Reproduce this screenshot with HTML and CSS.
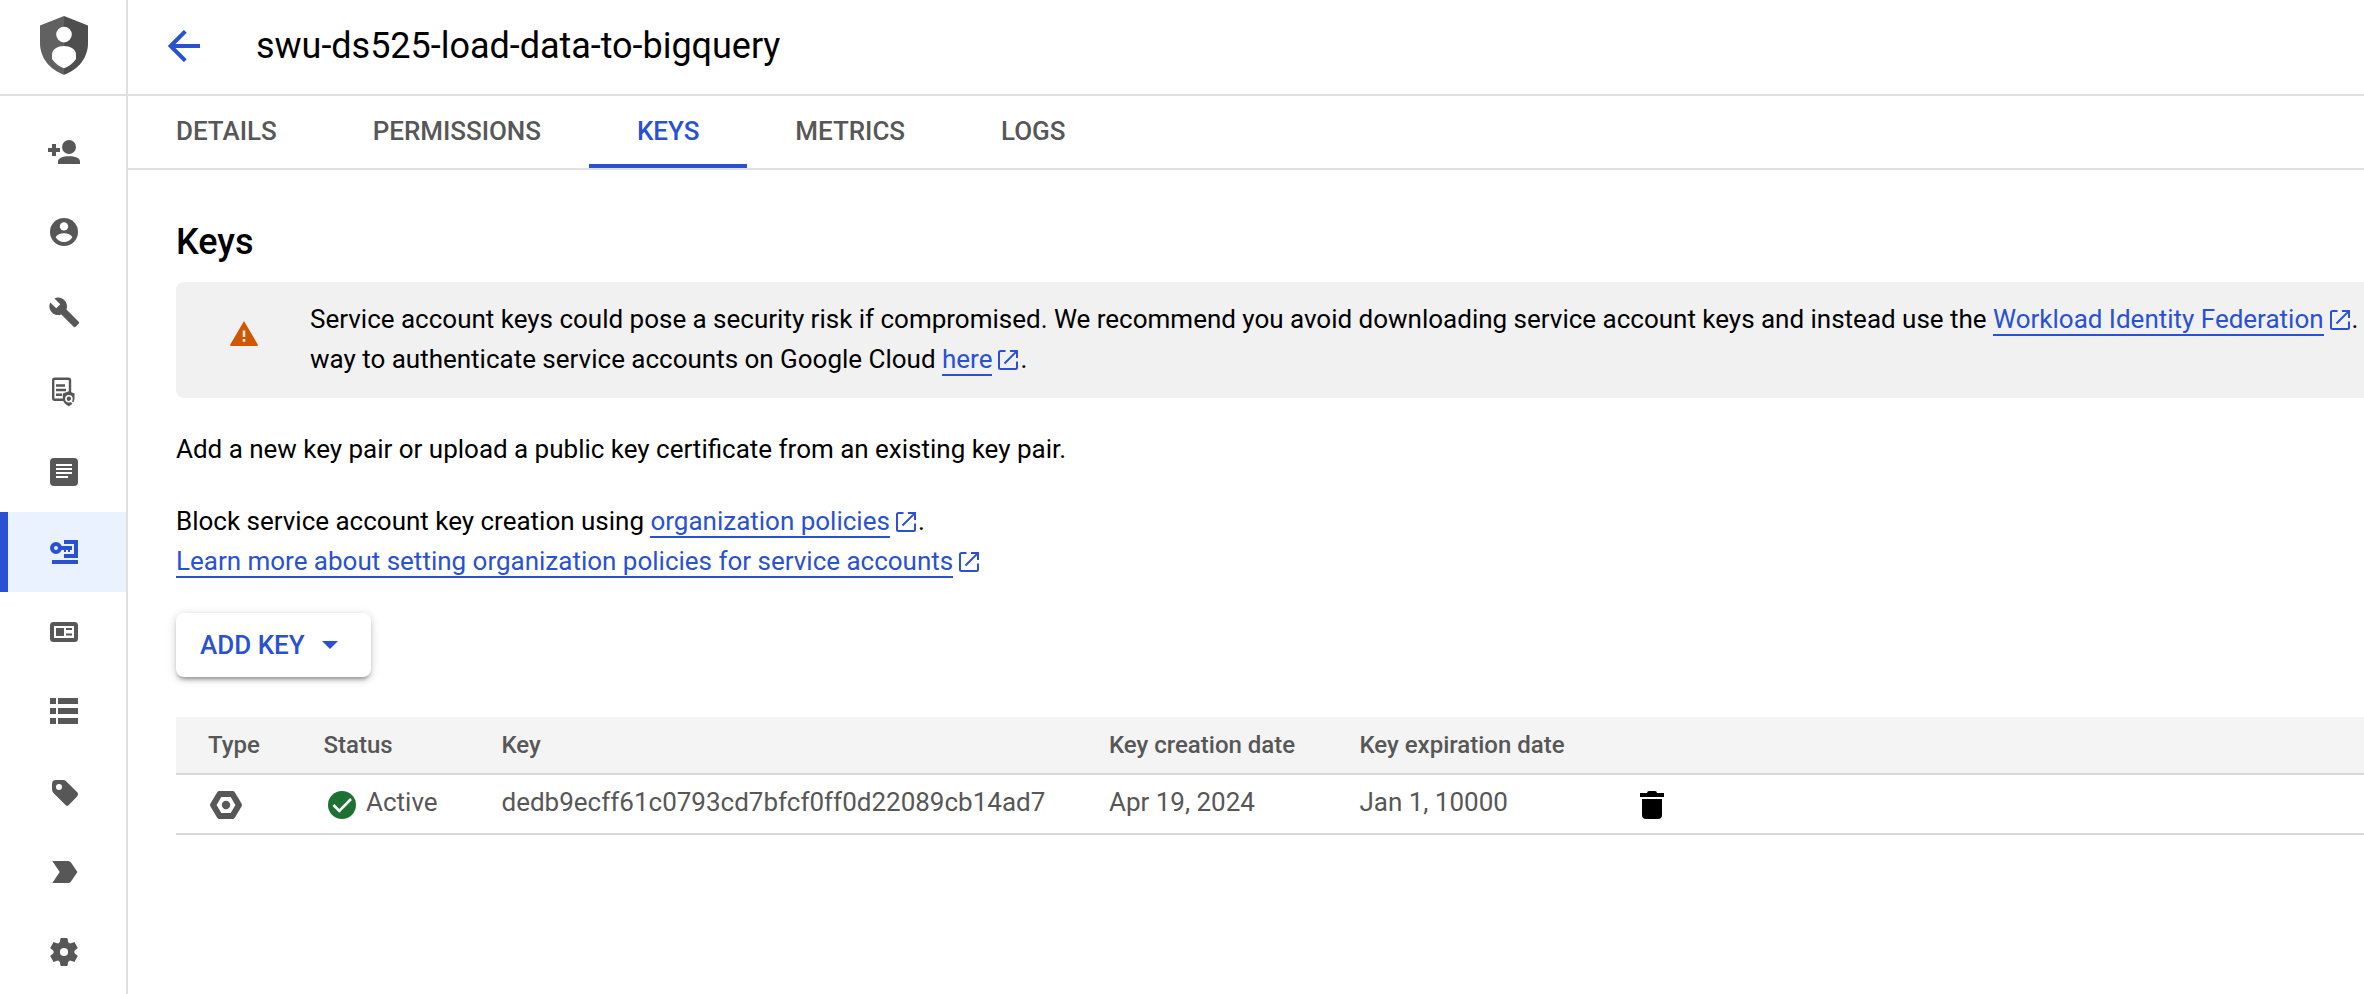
FILE: index.html
```html
<!DOCTYPE html>
<html lang="en">
<head>
<meta charset="utf-8">
<title>swu-ds525-load-data-to-bigquery</title>
<link rel="stylesheet" href="styles.css">
</head>
<body>
<svg class="defs" aria-hidden="true">
  <symbol id="external" viewBox="0 0 20 20">
    <path d="M7.500 1H2.500Q1 1 1 2.500V17.500Q1 19 2.500 19H17.500Q19 19 19 17.500V11.500M12 1H19V8M18.600 1.400L6.500 13.500" fill="none" stroke="currentColor" stroke-width="2"/>
  </symbol>
</svg>
<div class="app">
  <aside class="sidebar">
    <div class="product">
      <svg class="shield" viewBox="0 0 48 59">
        <path fill="#616161" d="M24 0L0 9.500V27C0 42 10 54 24 58.700z"/>
        <path fill="#4e4e4e" d="M24 0L48 9.500V27C48 42 38 54 24 58.700z"/>
        <circle cx="24" cy="18.600" r="7.800" fill="#fff"/>
        <path fill="#fff" d="M12 38.500C12 33 18 30 24 30S36 33 36 38.500V43Q31.500 49.500 24 52.300Q16.500 49.500 12 43z"/>
      </svg>
    </div>
    <nav class="nav">
      <a class="nav-item"><svg viewBox="0 0 36 36"><path d="M6 10h4v4h4v4h-4v4H6v-4H2v-4h4z"/><circle cx="23" cy="13" r="7"/><path d="M12 30V27.500C12 24 17 22.300 23 22.300S34 24 34 27.500V30z"/></svg></a>
      <a class="nav-item"><svg viewBox="0 0 36 36"><circle cx="18" cy="18" r="14"/><circle class="cut" cx="18" cy="12.400" r="4.200"/><path class="cut" d="M9.600 23.300C11 20.600 14.500 19.300 18 19.300S25 20.600 26.400 23.300C24.500 26.300 21.500 28 18 28S11.500 26.300 9.600 23.300z"/></svg></a>
      <a class="nav-item"><svg viewBox="0 0 36 36"><path transform="translate(2.100 2.100) scale(1.350)" d="M22.700 19l-9.100-9.100c.9-2.300.4-5-1.500-6.900-2-2-5-2.400-7.400-1.300L9 6 6 9 1.600 4.700C.4 7.100.9 10.100 2.900 12.100c1.900 1.900 4.600 2.400 6.900 1.500l9.100 9.100c.4.4 1 .4 1.400 0l2.300-2.300c.5-.4.5-1.100.1-1.400z"/></svg></a>
      <a class="nav-item"><svg viewBox="0 0 36 36"><rect x="7.200" y="4.700" width="16.800" height="21" rx="1.500" class="line"/><path class="line" d="M10 11.500h9M10 16h10M10 20.800h6"/><path d="M22.800 17.300l5.700 2.200v4.500c0 4-2.300 6.700-5.700 8.200-3.500-1.500-6-4.200-6-8.200v-4.500z"/><circle cx="22.900" cy="24.800" r="3" fill="none" stroke="#fff" stroke-width="1.600"/><path d="M24 26.300l3.400 3.400" stroke="#fff" stroke-width="1.400"/></svg></a>
      <a class="nav-item"><svg viewBox="0 0 36 36"><rect x="4" y="4" width="28" height="28" rx="4"/><path d="M10 11h16M10 15h16M10 19h16M10 23h12" stroke="#fff" stroke-width="2"/></svg></a>
      <a class="nav-item active"><svg viewBox="0 0 36 36"><path fill-rule="evenodd" d="M10 8a6 6 0 1 0 0 12a6 6 0 1 0 0-12zM10 12a2 2 0 1 1 0 4a2 2 0 1 1 0-4z"/><path d="M15 12h11v4h-2v2h-2v-2h-2v2h-2v-2h-3z"/><path d="M18 6h14v18H18v-4h10V10H18zM6 26h26v4H6z"/></svg></a>
      <a class="nav-item"><svg viewBox="0 0 36 36"><rect x="4" y="8" width="28" height="20" rx="3.500"/><path class="cut" d="M8 12h20v12H8z"/><path d="M10 14h8v8h-8zM20 14h6v2h-6zM20 19.500h6v2h-6z"/></svg></a>
      <a class="nav-item"><svg viewBox="0 0 36 36"><path d="M4 4h6v6H4zM12 4h20v6H12zM4 14h6v6H4zM12 14h20v6H12zM4 24h6v6H4zM12 24h20v6H12z"/></svg></a>
      <a class="nav-item"><svg viewBox="0 0 36 36"><path d="M10 6h7q2 0 3.400 1.400L31 18q2 2.200 0 4.400L22.800 31q-1.600 1.700-3.200 0L7.400 19Q6 17.600 6 15.600V10q0-4 4-4z"/><circle class="cut" cx="13" cy="13" r="3"/></svg></a>
      <a class="nav-item"><svg viewBox="0 0 36 36"><path d="M6.300 7H22q2 0 3 1.500L31.400 18 25 27.500q-1 1.500-3 1.500H6.300L13.700 18z"/></svg></a>
      <a class="nav-item"><svg viewBox="0 0 36 36"><g transform="translate(18 18)"><circle r="10.500"/><path id="cog" d="M-3.400-14h6.800l1 5h-8.800zM-3.400 14h6.800l1-5h-8.800z"/><use href="#cog" transform="rotate(60)"/><use href="#cog" transform="rotate(120)"/><circle r="4.100" class="cut"/></g></svg></a>
    </nav>
  </aside>
  <main class="main">
    <header class="header">
      <svg class="back" viewBox="0 0 32 32"><path d="M32 16H3M17.300 1.300L2.600 16L17.300 30.700" fill="none" stroke="#2951d1" stroke-width="4"/></svg>
      <h1 class="title">swu-ds525-load-data-to-bigquery</h1>
    </header>
    <nav class="tabs">
      <a class="tab">DETAILS</a><a class="tab">PERMISSIONS</a><a class="tab selected">KEYS</a><a class="tab">METRICS</a><a class="tab">LOGS</a>
    </nav>
    <section class="content">
      <h2 class="heading">Keys</h2>
      <div class="banner">
        <svg class="warning" viewBox="0 0 28 25"><path fill="#d05700" d="M14 0L27.700 23.500Q28.300 25 27 25H1Q-.3 25 .3 23.500z"/><path fill="#f1f1f1" d="M12.700 9.500h2.600v6.500h-2.600zM12.700 18h2.600v2.700h-2.600z"/></svg>
        <p class="banner-text">Service account keys could pose a security risk if compromised. We recommend you avoid downloading service account keys and instead use the <a class="link">Workload Identity Federation</a><svg class="ext"><use href="#external"/></svg>.<br>way to authenticate service accounts on Google Cloud <a class="link">here</a><svg class="ext"><use href="#external"/></svg>.</p>
      </div>
      <p class="para">Add a new key pair or upload a public key certificate from an existing key pair.</p>
      <p class="para">Block service account key creation using <a class="link">organization policies</a><svg class="ext"><use href="#external"/></svg>.<br><a class="link">Learn more about setting organization policies for service accounts</a><svg class="ext"><use href="#external"/></svg></p>
      <button class="add-key">ADD KEY<svg class="caret" viewBox="0 0 16 8"><path fill="#2951d1" d="M0 0h16L8 8z"/></svg></button>
      <div class="table">
        <div class="row head"><span>Type</span><span>Status</span><span>Key</span><span>Key creation date</span><span>Key expiration date</span><span></span></div>
        <div class="row body">
          <span class="type"><svg class="hex" viewBox="0 0 32 28"><path fill="#575757" fill-rule="evenodd" d="M9.500 0h13q1.500 0 2.300 1.300L31.500 12.500q.9 1.500 0 3L24.800 26.700Q24 28 22.500 28h-13Q8 28 7.200 26.700L.5 15.500q-.9-1.500 0-3L7.200 1.300Q8 0 9.500 0zM11.300 6L6.600 14l4.700 8h9.400l4.700-8-4.700-8z"/><circle cx="16" cy="14" r="4.200" fill="#575757"/></svg></span>
          <span class="status"><svg class="check" viewBox="0 0 28 28"><circle cx="14" cy="14" r="14" fill="#1e7133"/><path d="M5.500 14L11.300 19.800L23 8" fill="none" stroke="#fff" stroke-width="2.600"/></svg>Active</span>
          <span>dedb9ecff61c0793cd7bfcf0ff0d22089cb14ad7</span>
          <span>Apr 19, 2024</span>
          <span>Jan 1, 10000</span>
          <span class="remove"><svg class="trash" viewBox="0 0 24 28"><path d="M0 2h7q.3-2 2-2h6q1.700 0 2 2h7v4H0zM2 8h20v16q0 4-4 4H6q-4 0-4-4z"/></svg></span>
        </div>
      </div>
    </section>
  </main>
</div>
</body>
</html>
```
FILE: styles.css
```css
* { box-sizing: border-box; margin: 0; padding: 0; }
html { height: 994px; overflow: hidden; }
body { height: 994px; background: #fff; color: #000; font-family: Roboto, "Liberation Sans", sans-serif; font-size: 26px; line-height: 40px; overflow: hidden; word-spacing: -0.06px; }
svg { display: block; flex: none; }
.defs { display: none; }
.app { display: flex; height: 994px; }
.sidebar { flex: none; width: 128px; border-right: 2px solid #e0e0e0; }
.product { height: 96px; border-bottom: 2px solid #e0e0e0; padding: 16px 0 0 40px; }
.shield { width: 48px; height: 59px; }
.nav { padding-top: 16px; }
.nav-item { display: flex; align-items: center; height: 80px; padding-left: 46px; fill: #575757; }
.nav-item svg { width: 36px; height: 36px; }
.nav-item.active { border-left: 8px solid #2951d1; padding-left: 38px; background: #eaf2ff; fill: #2951d1; }
.cut { fill: #fff; }
.line { fill: none; stroke: #575757; stroke-width: 2.4; }
.main { flex: 1; min-width: 0; overflow: hidden; }
.header { display: flex; height: 96px; padding: 22px 0 0 40px; border-bottom: 2px solid #e0e0e0; }
.back { width: 32px; height: 32px; margin: 8px 56px 0 0; }
.title { font-size: 36px; line-height: 48px; font-weight: 400; letter-spacing: -0.03px; white-space: nowrap; }
.tabs { display: flex; height: 74px; border-bottom: 2px solid #e0e0e0; }
.tab { padding: 15px 48px 0; color: #575757; font-weight: 500; letter-spacing: -0.04px; }
.tab.selected { color: #2951d1; border-bottom: 4px solid #2951d1; }
.content { padding: 48px 0 0 48px; }
.heading { font-size: 36px; line-height: 48px; font-weight: 500; margin-bottom: 16px; }
.banner { display: flex; height: 116px; padding: 17px 0 0 54px; background: #f1f1f1; border-radius: 8px 0 0 8px; margin-bottom: 31px; }
.warning { width: 28px; height: 25px; margin: 22px 52px 0 0; }
.banner-text { white-space: nowrap; }
.para { margin-bottom: 32px; white-space: nowrap; }
.link { color: #2951d1; border-bottom: 2px solid #2951d1; }
.ext { display: inline-block; width: 20px; height: 20px; margin: 0 2px 0 6px; vertical-align: -2px; color: #2951d1; }
.add-key { display: flex; align-items: center; width: 195px; height: 64px; padding-left: 24px; border: 0; border-radius: 8px; background: #fff; color: #2951d1; font: 500 26px/40px Roboto, "Liberation Sans", sans-serif; white-space: nowrap; box-shadow: 0 4px 4px -2px rgba(0,0,0,.35), 0 2px 10px rgba(0,0,0,.2); }
.caret { width: 16px; height: 8px; margin-left: 17px; }
.table { margin-top: 40px; color: #575757; }
.row { display: grid; grid-template-columns: 115.500px 178px 607.500px 250.500px 276.500px 1fr; padding-left: 32px; border-bottom: 2px solid #d8d8d8; white-space: nowrap; }
.head { height: 58px; padding-top: 8px; background: #f4f4f4; font-size: 24px; font-weight: 500; }
.body { height: 60px; padding-top: 7px; }
.type { padding: 9px 0 0 2px; }
.hex { width: 32px; height: 28px; }
.status { display: flex; padding-left: 4.500px; }
.check { width: 28px; height: 28px; margin: 9px 10px 0 0; }
.remove { padding: 9px 0 0 4px; }
.trash { width: 24px; height: 28px; }
```
